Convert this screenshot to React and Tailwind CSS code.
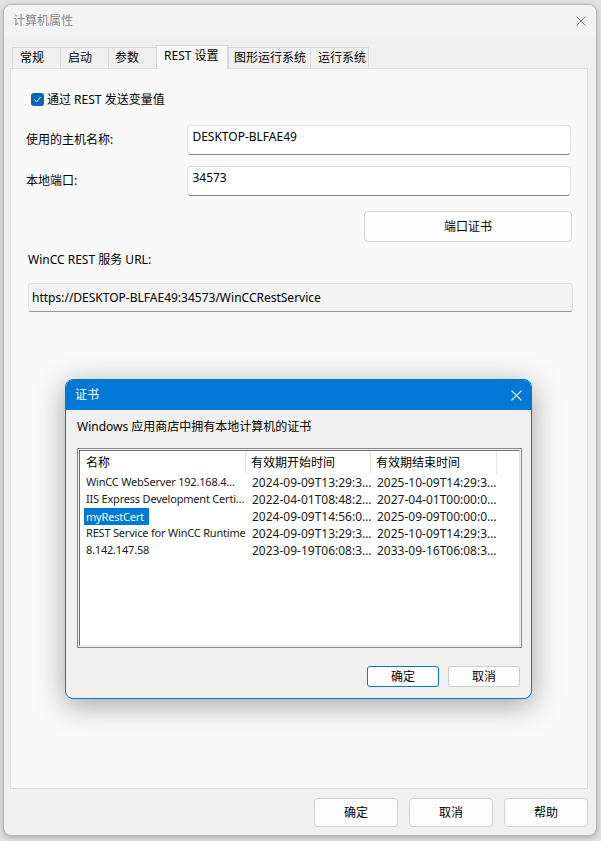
import React from "react";

const X = ({ color, size = 10 }) => (
  <svg width={size} height={size} viewBox="0 0 10 10">
    <path d="M0.5 0.5 L9.5 9.5 M9.5 0.5 L0.5 9.5" stroke={color} strokeWidth="1" fill="none" />
  </svg>
);

const tabs = [
  { t: "常规", w: 48, pl: 7 },
  { t: "启动", w: 48, pl: 7 },
  { t: "参数", w: 48, pl: 6 },
  { t: "REST 设置", w: 72, pl: 7, sel: true },
  { t: "图形运行系统", w: 82, pl: 5 },
  { t: "运行系统", w: 58, pl: 7 },
];

const rows = [
  ["WinCC WebServer 192.168.4…", "2024-09-09T13:29:3…", "2025-10-09T14:29:3…"],
  ["IIS Express Development Certi…", "2022-04-01T08:48:2…", "2027-04-01T00:00:0…"],
  ["myRestCert", "2024-09-09T14:56:0…", "2025-09-09T00:00:0…", true],
  ["REST Service for WinCC Runtime", "2024-09-09T13:29:3…", "2025-10-09T14:29:3…"],
  ["8.142.147.58", "2023-09-19T06:08:3…", "2033-09-16T06:08:3…"],
];

function Btn({ children, className = "" }) {
  return (
    <div className={"flex items-center justify-center rounded-[4px] border border-[#d3d3d3] bg-[#fdfdfd] text-[12px] text-black " + className}>
      {children}
    </div>
  );
}

export default function App() {
  return (
    <div className="w-[601px] h-[841px] bg-[#e3e3e3] pl-[3px] pt-[4px] font-['Noto_Sans','Noto_Sans_CJK_SC',sans-serif] text-[12px] text-black">
      <div className="relative w-[594px] h-[832px] rounded-[8px] border border-[#b8b8b8] bg-[#f0f0f0] shadow-[0_2px_6px_rgba(0,0,0,0.25)] flex flex-col overflow-visible">
        {/* title bar */}
        <div className="h-[31px] shrink-0 rounded-t-[8px] bg-[#f3f3f3] flex items-center pl-[9px] pr-[10px] justify-between">
          <span className="text-[12px] text-[#8b8b8b]">计算机属性</span>
          <X color="#7a7a7a" />
        </div>
        {/* tabs */}
        <div className="flex items-end h-[32px] ml-[8px] mt-0">
          {tabs.map((tb) => (
            <div
              key={tb.t}
              style={{ width: tb.w, paddingLeft: tb.pl }}
              className={
                tb.sel
                  ? "h-[24px] -mb-[1px] relative z-10 bg-[#f9f9f9] border border-b-0 border-[#d9d9d9] flex items-start pt-[1px] whitespace-nowrap text-[12px]"
                  : "h-[21px] bg-[#f0f0f0] border border-b-0 border-r-0 border-[#dadada] flex items-center whitespace-nowrap text-[12px]"
              }
            >
              {tb.t}
            </div>
          ))}
          <div className="h-[21px] border-l border-[#dadada]" />
        </div>
        {/* panel */}
        <div className="ml-[6px] w-[578px] h-[721px] bg-[#f9f9f9] border border-[#e0e0e0] px-[16px] pt-[24px] flex flex-col">
          <div className="flex items-center pl-[4px] h-[13px]">
            <div className="w-[13px] h-[13px] rounded-[3px] bg-[#0067c0] flex items-center justify-center">
              <svg width="9" height="9" viewBox="0 0 9 9">
                <path d="M1.5 4.8 L3.6 6.8 L7.5 2.2" stroke="white" strokeWidth="1" fill="none" />
              </svg>
            </div>
            <span className="ml-[3px]">通过 REST 发送变量值</span>
          </div>
          <div className="flex items-center mt-[19px]">
            <span className="w-[162px] -ml-[1px]">使用的主机名称:</span>
            <div className="w-[385px] h-[30px] bg-white border border-[#e3e3e3] border-b-[#8a8a8a] rounded-[4px] pl-[4px] pt-[2px]">DESKTOP-BLFAE49</div>
          </div>
          <div className="flex items-center mt-[11px]">
            <span className="w-[162px] -ml-[1px]">本地端口:</span>
            <div className="w-[385px] h-[30px] bg-white border border-[#e3e3e3] border-b-[#8a8a8a] rounded-[4px] pl-[4px] pt-[2px]">34573</div>
          </div>
          <div className="flex justify-end mt-[15px] -mr-[1px]">
            <Btn className="w-[208px] h-[31px]">端口证书</Btn>
          </div>
          <div className="mt-[9px] pl-[1px] h-[18px] flex items-center">WinCC REST 服务 URL:</div>
          <div className="mt-[14px] ml-[1px] w-[545px] h-[29px] bg-[#f3f3f3] border border-[#e3e3e3] border-b-[#9a9a9a] rounded-[3px] pl-[3px] flex items-center">
            https://DESKTOP-BLFAE49:34573/WinCCRestService
          </div>
        </div>
        {/* bottom buttons */}
        <div className="flex justify-end gap-[11px] mt-[9px] mr-[8px]">
          <Btn className="w-[84px] h-[29px]">确定</Btn>
          <Btn className="w-[84px] h-[29px]">取消</Btn>
          <Btn className="w-[84px] h-[29px]">帮助</Btn>
        </div>

        {/* certificate dialog */}
        <div className="absolute left-[61px] top-[374px] w-[467px] h-[320px] rounded-[8px] border border-[#0078d4] bg-[#f0f0f0] shadow-[0_6px_28px_rgba(0,0,0,0.35)] flex flex-col overflow-hidden">
          <div className="h-[30px] shrink-0 bg-[#0078d4] flex items-center justify-between pl-[9px] pr-[9px] text-white">
            <span className="text-[12px]">证书</span>
            <X color="white" size={11} />
          </div>
          <div className="pl-[11px] mt-[8px] h-[18px] flex items-center text-[12px]">Windows 应用商店中拥有本地计算机的证书</div>
          <div className="ml-[11px] mt-[12px] w-[445px] h-[200px] border border-[#8a8a8a] p-[1px] bg-[#f0f0f0]">
            <div className="w-full h-full border border-t-[#6e6e6e] border-l-[#6e6e6e] border-b-[#e3e3e3] border-r-[#e3e3e3] bg-white flex flex-col">
              <div className="h-[23px] flex text-[12px] shrink-0">
                <div className="w-[166px] border-r border-[#e5e5e5] pl-[6px] flex items-center">名称</div>
                <div className="w-[125px] border-r border-[#e5e5e5] pl-[5px] flex items-center">有效期开始时间</div>
                <div className="w-[126px] border-r border-[#e5e5e5] pl-[5px] flex items-center">有效期结束时间</div>
              </div>
              <div className="flex flex-col text-[12px] text-[#1a1a1a]">
                {rows.map((r, i) => (
                  <div key={i} className="h-[17px] flex items-center whitespace-nowrap">
                    <div className="w-[167px] pl-[4px] text-[11px] tracking-[-0.2px]">
                      {r[3] ? (
                        <span className="inline-block bg-[#0078d7] text-white pl-[2px] pr-[5px] h-[17px] leading-[17px]">{r[0]}</span>
                      ) : (
                        <span className="pl-[2px]">{r[0]}</span>
                      )}
                    </div>
                    <div className="w-[125px] pl-[5px]">{r[1]}</div>
                    <div className="w-[125px] pl-[5px]">{r[2]}</div>
                  </div>
                ))}
              </div>
            </div>
          </div>
          <div className="flex justify-end gap-[9px] mt-[18px] mr-[11px]">
            <div className="w-[72px] h-[21px] rounded-[3px] border border-[#0078d4] bg-[#fdfdfd] flex items-center justify-center text-[12px]">确定</div>
            <div className="w-[72px] h-[21px] rounded-[3px] border border-[#cccccc] bg-[#fdfdfd] flex items-center justify-center text-[12px]">取消</div>
          </div>
        </div>
      </div>
    </div>
  );
}
